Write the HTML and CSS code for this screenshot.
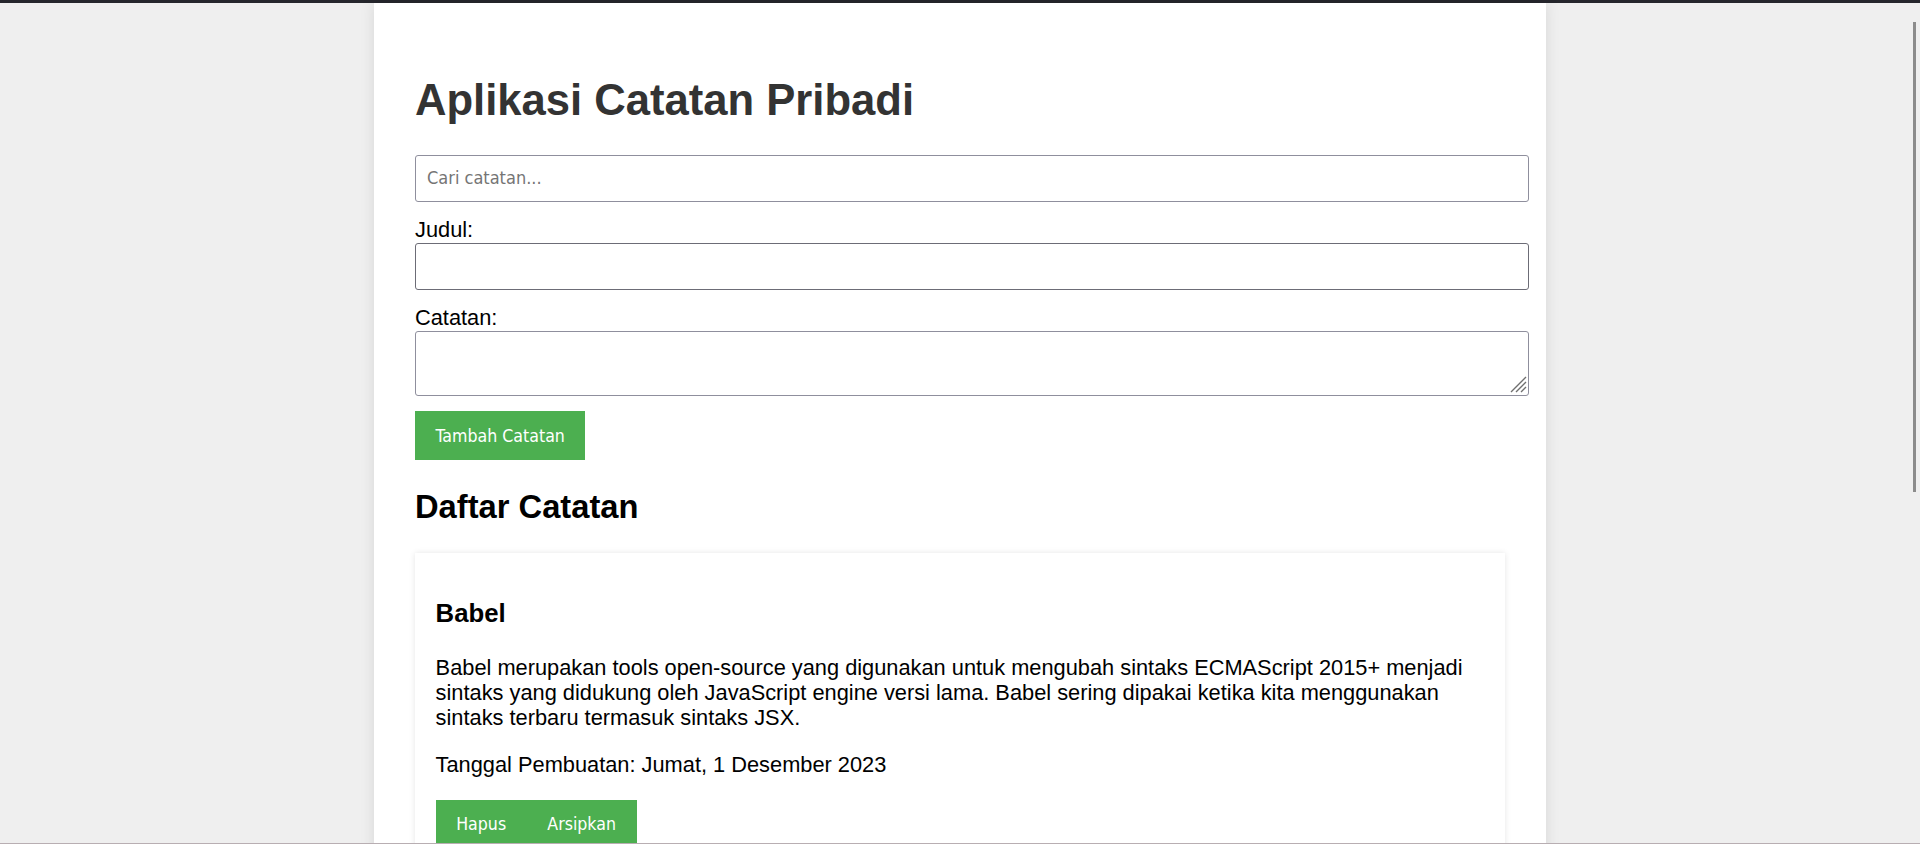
FILE: index.html
```html
<!DOCTYPE html>
<html lang="id">
<head>
<meta charset="utf-8">
<title>Aplikasi Catatan Pribadi</title>
<link rel="stylesheet" href="styles.css">
</head>
<body>
<div class="topbar"></div>
<div class="container">
  <h1 class="app-title">Aplikasi Catatan Pribadi</h1>
  <input class="field search" type="text" placeholder="Cari catatan...">
  <form class="note-form">
    <label class="label" for="judul">Judul:</label>
    <input class="field field-hover" id="judul" type="text">
    <label class="label" for="catatan">Catatan:</label>
    <div class="area-wrap">
      <textarea class="field area" id="catatan"></textarea>
      <svg class="grip" width="18" height="18" viewBox="0 0 18 18" aria-hidden="true">
        <path d="M17 2 L2 17 M17 7 L7 17 M17 12 L12 17" stroke="#6f6f6f" stroke-width="1.4" fill="none"/>
      </svg>
    </div>
    <button class="btn" type="button">Tambah Catatan</button>
  </form>
  <h2 class="section-title">Daftar Catatan</h2>
  <div class="note-card">
    <h3 class="note-title">Babel</h3>
    <p class="note-body">Babel merupakan tools open-source yang digunakan untuk mengubah sintaks ECMAScript 2015+ menjadi sintaks yang didukung oleh JavaScript engine versi lama. Babel sering dipakai ketika kita menggunakan sintaks terbaru termasuk sintaks JSX.</p>
    <p class="note-date">Tanggal Pembuatan: Jumat, 1 Desember 2023</p>
    <div class="actions">
      <button class="btn" type="button">Hapus</button>
      <button class="btn" type="button">Arsipkan</button>
    </div>
  </div>
</div>
<div class="scroll-thumb"></div>
<div class="bottom-line"></div>
</body>
</html>
```
FILE: styles.css
```css
html, body {
  margin: 0;
  padding: 0;
  overflow: hidden;
}
body {
  background: #efefef;
  font-family: "Liberation Sans", Arial, sans-serif;
  font-size: 21.8px;
  color: #000;
}
.topbar {
  height: 3px;
  background: #25262c;
}
.container {
  width: 1172px;
  box-sizing: border-box;
  margin: 0 auto;
  padding: 42px 41px 60px;
  background: #fff;
  box-shadow: 0 0 14px rgba(0, 0, 0, 0.1);
  min-height: 1000px;
}
.app-title {
  font-size: 43.6px;
  line-height: 50.6px;
  color: #333;
  margin: 29.5px 0;
}
.field {
  display: block;
  width: 100%;
  box-sizing: content-box;
  padding: 11.5px 11px;
  border: 1px solid #8f8f9d;
  border-radius: 3px;
  font-family: "DejaVu Sans Condensed", "DejaVu Sans", sans-serif;
  font-stretch: condensed;
  font-size: 18px;
  line-height: 22px;
  height: 22px;
  margin: 0 0 15px;
  background: #fff;
  color: #000;
}
.field::placeholder {
  color: #757575;
}
.field-hover {
  border-color: #6c6c76;
}
.area-wrap {
  position: relative;
  margin: 0 0 15px;
}
.area {
  height: 40px;
  resize: none;
  margin: 0;
}
.grip {
  position: absolute;
  right: -22px;
  bottom: 3px;
}
.note-form {
  margin: 0;
}
.label {
  display: block;
  line-height: 25.3px;
  margin-bottom: 1px;
}
.btn {
  display: block;
  border: none;
  background: #4caf50;
  color: #fff;
  font-family: "DejaVu Sans Condensed", "DejaVu Sans", sans-serif;
  font-stretch: condensed;
  font-size: 17.6px;
  line-height: 22px;
  padding: 13.5px 20.6px;
  margin: 0;
  border-radius: 0;
}
.section-title {
  font-size: 32.7px;
  line-height: 37.9px;
  margin: 27.4px 0;
}
.note-card {
  background: #fff;
  padding: 20.6px 20.6px 40px;
  box-shadow: 0 0 6px rgba(0, 0, 0, 0.1);
}
.note-title {
  font-size: 25.74px;
  line-height: 29.6px;
  margin: 25.74px 0;
}
.note-body,
.note-date {
  line-height: 25.3px;
  margin: 22px 0;
}
.actions {
  display: flex;
}
.scroll-thumb {
  position: fixed;
  top: 22px;
  right: 4px;
  width: 3px;
  height: 470px;
  background: #8c8c8c;
}
.bottom-line {
  position: fixed;
  left: 0;
  right: 0;
  bottom: 0;
  height: 1px;
  background: #b8aeb2;
}
```
